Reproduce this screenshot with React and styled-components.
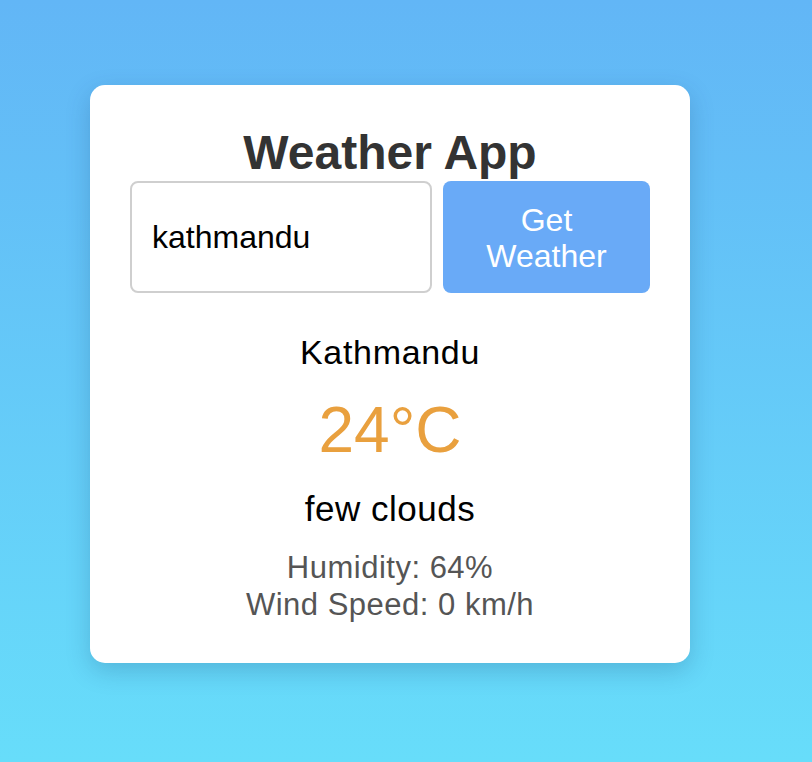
import React, { useState } from 'react'
import styled, { createGlobalStyle } from 'styled-components'

const GlobalStyle = createGlobalStyle`
  html, body {
    margin: 0;
    padding: 0;
  }
  body {
    min-height: 762px;
    background: linear-gradient(180deg, #62b6f6 0%, #67ddfa 100%);
    font-family: "Liberation Sans", Arial, Helvetica, sans-serif;
  }
`

const Page = styled.div`
  display: flex;
  align-items: flex-start;
  padding: 85px 0 0 90px;
`

const Card = styled.div`
  width: 600px;
  box-sizing: border-box;
  padding: 41px 40px 40px;
  background: #fff;
  border-radius: 15px;
  box-shadow: 0 8px 24px rgba(20, 60, 110, 0.22);
  display: flex;
  flex-direction: column;
  align-items: center;
  text-align: center;
`

const Title = styled.h1`
  margin: 0;
  font-size: 48px;
  line-height: 54px;
  font-weight: 700;
  color: #333;
`

const SearchRow = styled.form`
  align-self: stretch;
  display: flex;
  gap: 11px;
  margin: 1px 0 0;
`

const CityInput = styled.input`
  flex: 1;
  min-width: 0;
  box-sizing: border-box;
  padding: 0 20px;
  border: 2px solid #cfcfcf;
  border-radius: 8px;
  font-family: inherit;
  font-size: 32px;
  color: #000;
  outline: none;
`

const SearchButton = styled.button`
  flex: 0 0 207px;
  box-sizing: border-box;
  padding: 21px 20px 19px;
  border: none;
  border-radius: 8px;
  background: #69aaf7;
  color: #fff;
  font-family: inherit;
  font-size: 32px;
  line-height: 36px;
  cursor: pointer;
`

const City = styled.h2`
  margin: 40px 0 0;
  font-size: 34px;
  line-height: 38px;
  font-weight: 400;
  letter-spacing: 0.7px;
  color: #000;
`

const Temp = styled.div`
  margin-top: 22px;
  font-size: 64px;
  line-height: 74px;
  color: #e9a03e;
`

const Condition = styled.div`
  margin-top: 22px;
  font-size: 35px;
  line-height: 40px;
  letter-spacing: 0.5px;
  color: #000;
`

const Details = styled.div`
  margin-top: 21px;
  font-size: 31px;
  line-height: 36.6px;
  letter-spacing: 0.5px;
  color: #555;
`

export default function App() {
  const [city, setCity] = useState('kathmandu')
  const weather = {
    name: 'Kathmandu',
    temp: 24,
    description: 'few clouds',
    humidity: 64,
    wind: 0,
  }

  return (
    <>
      <GlobalStyle />
      <Page>
        <Card>
          <Title>Weather App</Title>
          <SearchRow onSubmit={e => e.preventDefault()}>
            <CityInput value={city} onChange={e => setCity(e.target.value)} />
            <SearchButton type="submit">Get Weather</SearchButton>
          </SearchRow>
          <City>{weather.name}</City>
          <Temp>{weather.temp}°C</Temp>
          <Condition>{weather.description}</Condition>
          <Details>
            Humidity: {weather.humidity}%
            <br />
            Wind Speed: {weather.wind} km/h
          </Details>
        </Card>
      </Page>
    </>
  )
}
